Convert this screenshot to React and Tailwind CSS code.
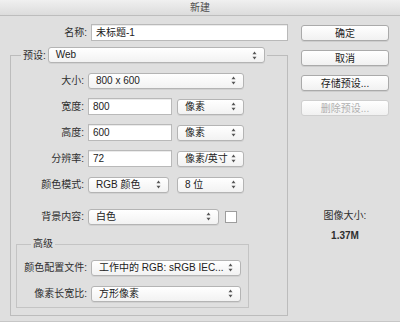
import React from 'react';

const font = { fontFamily: '"Liberation Sans", "Noto Sans CJK SC", sans-serif' };

function Arrows() {
  return (
    <svg width="5" height="9" viewBox="0 0 5 9" className="shrink-0">
      <path d="M2.5 0.5 L4.5 3.2 L0.5 3.2 Z" fill="#555" />
      <path d="M2.5 8.5 L4.5 5.8 L0.5 5.8 Z" fill="#555" />
    </svg>
  );
}

function Select({ value, className = '' }) {
  return (
    <div
      className={`h-[16px] flex items-center justify-between pl-[7px] pr-[7px] rounded-[3px] border border-[#b4b4b4] bg-gradient-to-b from-white to-[#f2f2f2] shadow-[0_1px_0_rgba(0,0,0,0.06)] text-[#222] ${className}`}
    >
      <span className="whitespace-nowrap leading-none">{value}</span>
      <Arrows />
    </div>
  );
}

function Input({ value, className = '' }) {
  return (
    <div className={`h-[17px] flex items-center pl-[4px] bg-white border border-[#b9b9b9] shadow-[inset_0_1px_0_rgba(0,0,0,0.08)] text-[#222] ${className}`}>
      {value}
    </div>
  );
}

function Row({ label, labelW = 'w-[77px]', children }) {
  return (
    <div className="flex items-center h-[17px]">
      <span className={`${labelW} text-right pr-[4px] text-[#2e2e2e] shrink-0`}>{label}</span>
      {children}
    </div>
  );
}

function Button({ children, disabled }) {
  return (
    <div
      className={`w-[88px] h-[16px] flex items-center justify-center rounded-[3px] border bg-gradient-to-b from-white to-[#f1f1f1] ${
        disabled ? 'border-[#cfcfcf] text-[#b0b0b0]' : 'border-[#aaaaaa] text-[#222] shadow-[0_1px_0_rgba(0,0,0,0.08)]'
      }`}
    >
      {children}
    </div>
  );
}

export default function App() {
  return (
    <div className="w-[400px] h-[327px] bg-white overflow-hidden text-[10px]" style={font}>
      <div className="h-[322px] bg-[#dfdfdf] border-b border-[#c6c6c6] flex flex-col">
        {/* title bar */}
        <div className="h-[16px] shrink-0 flex items-center justify-center bg-gradient-to-b from-[#f0f0f0] to-[#dcdcdc] border-b border-[#bdbdbd] text-[#4d4d4d]">
          新建
        </div>

        <div className="flex pl-[10px] pt-[8px]">
          {/* left */}
          <div className="w-[278px] flex flex-col">
            <div className="flex items-center h-[17px]">
              <span className="w-[81px] text-right pr-[4px] text-[#2e2e2e]">名称:</span>
              <Input value="未标题-1" className="w-[197px]" />
            </div>

            <fieldset className="mt-[6px] border border-[#bcbcbc] pb-[7px]">
              <legend className="ml-[10px] px-[2px] flex items-center">
                <span className="text-[#2e2e2e] pr-[2px]">预设:</span>
                <Select value="Web" className="w-[217px]" />
              </legend>

              <div className="flex flex-col gap-[9px] pt-[9px]">
                <Row label="大小:">
                  <Select value="800 x 600" className="w-[156px]" />
                </Row>
                <Row label="宽度:">
                  <Input value="800" className="w-[84px]" />
                  <Select value="像素" className="w-[67px] ml-[5px]" />
                </Row>
                <Row label="高度:">
                  <Input value="600" className="w-[84px]" />
                  <Select value="像素" className="w-[67px] ml-[5px]" />
                </Row>
                <Row label="分辨率:">
                  <Input value="72" className="w-[84px]" />
                  <Select value="像素/英寸" className="w-[67px] ml-[5px]" />
                </Row>
                <Row label="颜色模式:">
                  <Select value="RGB 颜色" className="w-[81px]" />
                  <Select value="8 位" className="w-[67px] ml-[8px]" />
                </Row>
                <div className="mt-[6px]">
                  <Row label="背景内容:">
                    <Select value="白色" className="w-[131px]" />
                    <div className="w-[12px] h-[12px] ml-[6px] bg-white border border-[#9d9d9d]" />
                  </Row>
                </div>
              </div>

              <fieldset className="mt-[12px] ml-[5px] w-[233px] border border-[#c4c4c4] pb-[5px]">
                <legend className="ml-[14px] px-[2px] text-[#2e2e2e] leading-[14px]">高级</legend>
                <div className="flex flex-col gap-[9px] pt-[8px]">
                  <Row label="颜色配置文件:" labelW="w-[74px]">
                    <Select value="工作中的 RGB: sRGB IEC..." className="w-[150px]" />
                  </Row>
                  <Row label="像素长宽比:" labelW="w-[74px]">
                    <Select value="方形像素" className="w-[150px]" />
                  </Row>
                </div>
              </fieldset>
            </fieldset>
          </div>

          {/* right */}
          <div className="ml-[13px] w-[88px] flex flex-col pt-[1px]">
            <div className="flex flex-col gap-[9px]">
              <Button>确定</Button>
              <Button>取消</Button>
              <Button>存储预设...</Button>
              <Button disabled>删除预设...</Button>
            </div>
            <div className="mt-[92px] flex flex-col items-center text-[#2e2e2e]">
              <span>图像大小:</span>
              <span className="mt-[5px] font-bold">1.37M</span>
            </div>
          </div>
        </div>
      </div>
    </div>
  );
}
